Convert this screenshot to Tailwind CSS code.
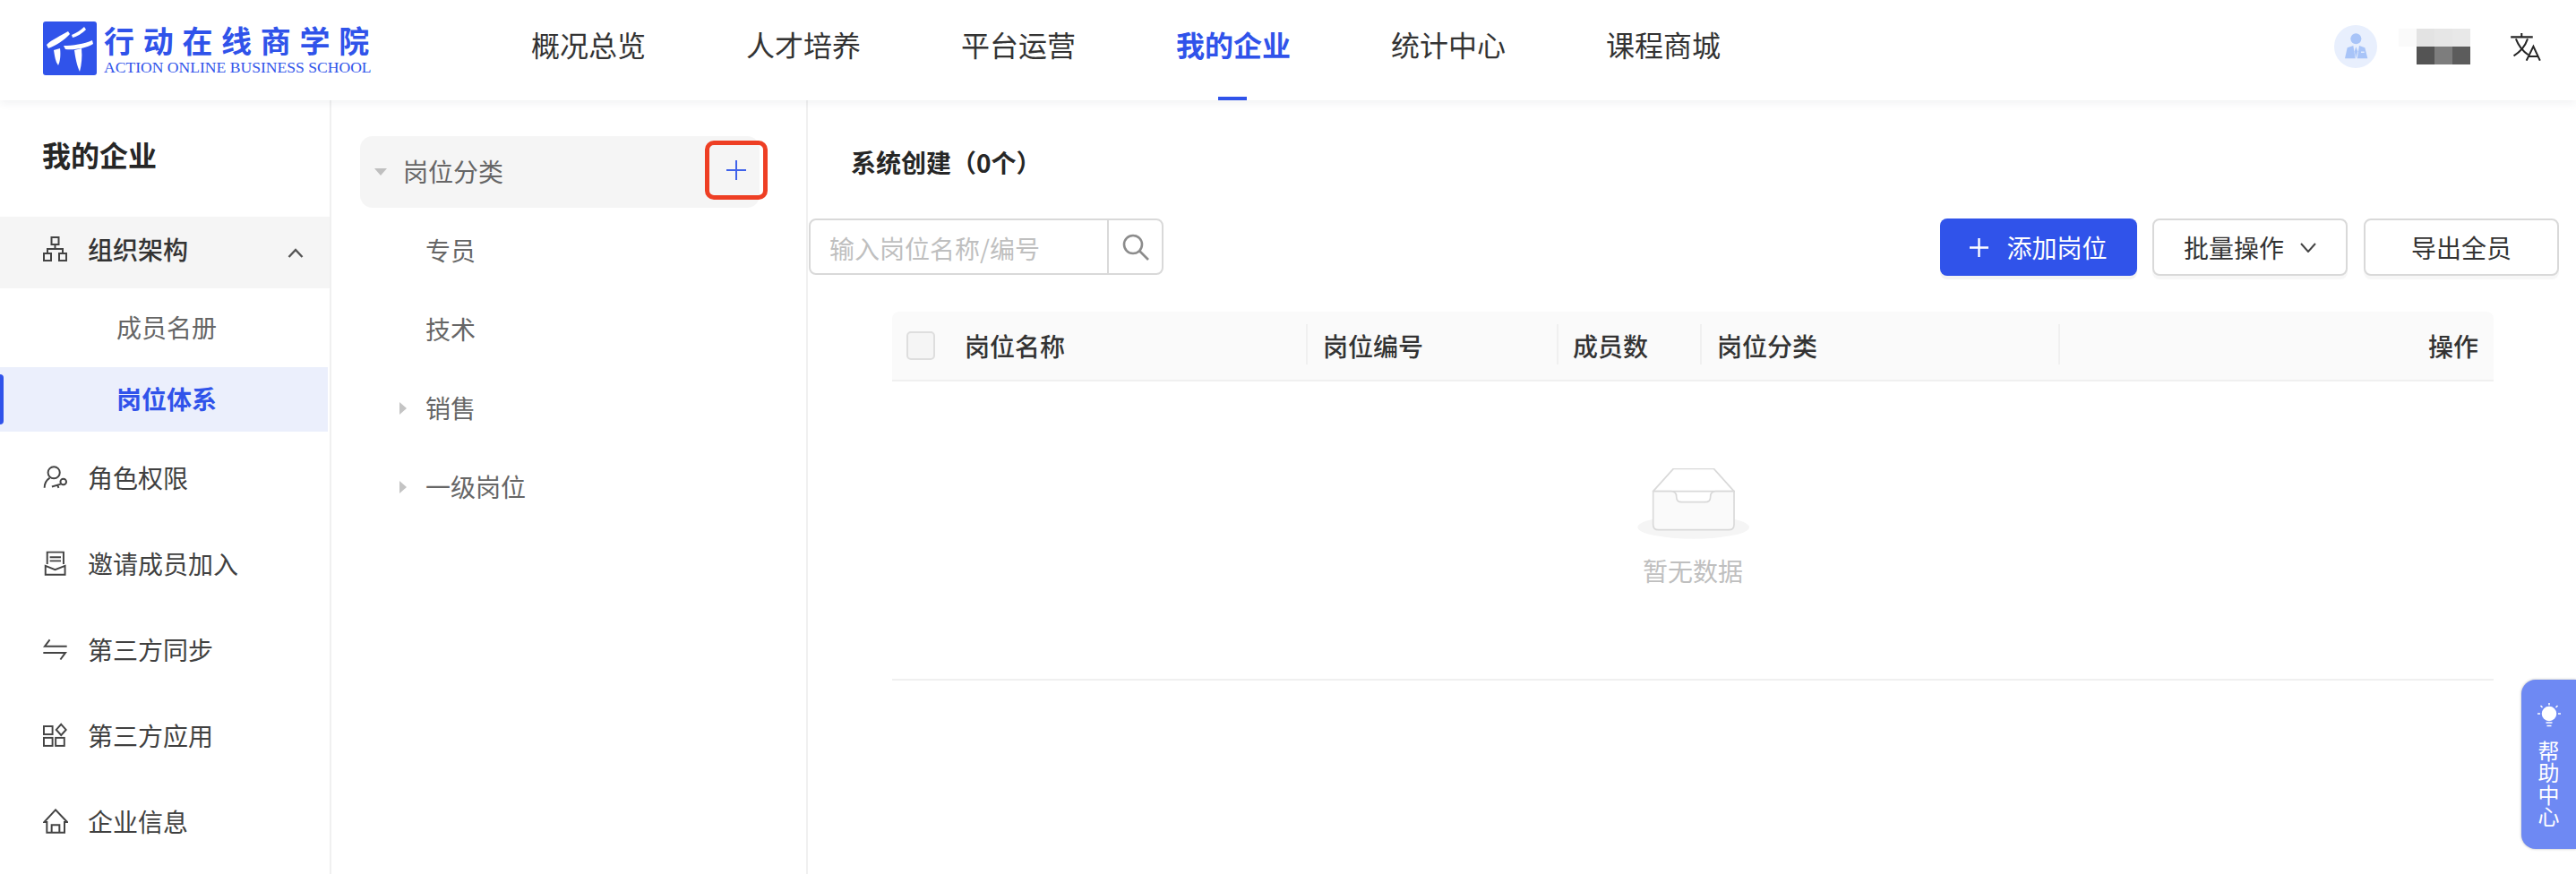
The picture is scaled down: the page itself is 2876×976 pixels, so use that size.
<!DOCTYPE html>
<html lang="zh-CN">
<head>
  <meta charset="UTF-8" />
  <title>我的企业 - 岗位体系</title>
  <script src="https://cdn.jsdelivr.net/npm/@tailwindcss/browser@4"></script>
</head>
<body class="bg-white text-[#333] font-['Noto_Sans_CJK_SC','Noto_Sans',sans-serif]">
<div class="relative w-[2876px] h-[976px] overflow-hidden flex flex-col">

  <!-- Top bar -->
  <header class="relative z-10 h-[112px] shrink-0 bg-white shadow-[0_2px_10px_rgba(40,50,80,0.08)] flex items-center">
    <div class="w-[593px] pl-[48px] pb-[4px] flex items-center gap-[8px] shrink-0">
      <svg class="w-[60px] h-[60px] shrink-0" viewBox="0 0 60 60">
        <rect width="60" height="60" rx="3" fill="#3053ea"/>
        <path d="M4 26 C10 20 20 16 28 11 L30 14 C24 21 14 27 6 30 Z" fill="#fff"/>
        <path d="M32 15 C37 13 42 10 46 6 L48 9 C44 13 38 17 33 18 Z" fill="#fff"/>
        <path d="M23 27 C33 27 46 25 55 21 L56 25 C48 30 35 32 25 31 Z" fill="#fff"/>
        <path d="M12 32 L19 30 C20 38 19 45 17 49 C14 45 13 39 12 32 Z" fill="#fff"/>
        <path d="M35 32 L43 30 C44 40 43 48 41 56 C38 50 36 40 35 32 Z" fill="#fff"/>
      </svg>
      <div class="flex flex-col">
        <span class="h-[42px] leading-[42px] text-[34px] font-bold tracking-[9.7px] whitespace-nowrap text-[#3053ea]">行动在线商学院</span>
        <span class="h-[18px] leading-[18px] text-[17.6px] whitespace-nowrap text-[#3053ea] font-['Liberation_Serif',serif]">ACTION ONLINE BUSINESS SCHOOL</span>
      </div>
    </div>

    <nav class="flex gap-[112px] text-[32px] leading-[40px] text-[#333]">
      <a class="h-[112px] pb-[14px] flex items-center">概况总览</a>
      <a class="h-[112px] pb-[14px] flex items-center">人才培养</a>
      <a class="h-[112px] pb-[14px] flex items-center">平台运营</a>
      <a class="relative h-[112px] pb-[14px] flex items-center font-semibold text-[#3053ea]">我的企业
        <span class="absolute left-[47px] bottom-0 w-[32px] h-[4px] bg-[#3053ea]"></span>
      </a>
      <a class="h-[112px] pb-[14px] flex items-center">统计中心</a>
      <a class="h-[112px] pb-[14px] flex items-center">课程商城</a>
    </nav>

    <div class="ml-auto pb-[8px] flex items-center pr-[39px]">
      <svg class="w-[48px] h-[48px]" viewBox="78 54 144 144">
        <circle cx="150" cy="126" r="72" fill="#e8effd"/>
        <circle cx="151" cy="100" r="18" fill="#a8c4f8"/>
        <path d="M114 166 L122 130 L142 123 L149 166 Z" fill="#a8c4f8"/>
        <path d="M162 123 L181 130 L190 166 L155 166 Z" fill="#a8c4f8"/>
        <path d="M151 127 L157 142 L151 164 L146 142 Z" fill="#a8c4f8"/>
        <rect x="168" y="143" width="11" height="3" fill="#fff"/>
      </svg>
      <div class="ml-[24px] w-[80px] h-[40px] grid grid-cols-4 grid-rows-2">
        <span class="bg-[#fafafa]"></span><span class="bg-[#e3e3e3]"></span><span class="bg-[#e6e6e6]"></span><span class="bg-[#e8e8e8]"></span>
        <span class="bg-white"></span><span class="bg-[#545454]"></span><span class="bg-[#7d7d7d]"></span><span class="bg-[#5c5c5c]"></span>
      </div>
      <svg class="ml-[45px] w-[34px] h-[31px]" viewBox="670 80 100 92" fill="none" stroke="#262626" stroke-width="6">
        <path d="M670 93 H743 M706 80 V93 M687 99 C695 120 710 140 728 152 M726 99 C718 122 702 142 680 155"/>
        <path d="M722 171 L745 124 L767 171 M729 157 H760"/>
      </svg>
    </div>
  </header>

  <div class="flex-1 flex min-h-0">
    <!-- Left menu -->
    <aside class="w-[370px] shrink-0 border-r-2 border-[#f0f0f0]">
      <h2 class="pl-[47px] pt-[40px] h-[130px] text-[32px] leading-[40px] font-semibold text-[#262626]">我的企业</h2>
      <div class="h-[80px] bg-[#f5f5f5] pb-[8px] flex items-center pl-[48px] pr-[29px] text-[28px] font-medium text-[#333]">
        <svg class="w-[27px] h-[28px] shrink-0" viewBox="0 0 27 28" fill="none" stroke="#444" stroke-width="2">
          <rect x="9.5" y="1" width="8" height="8"/><rect x="1" y="19" width="8" height="8"/><rect x="18" y="19" width="8" height="8"/>
          <path d="M13.5 9 V14 M5 19 V14 H22 V19"/>
        </svg>
        <span class="ml-[23px]">组织架构</span>
        <svg class="ml-auto w-[18px] h-[11px] mt-[8px]" viewBox="0 0 18 11" fill="none" stroke="#555" stroke-width="2.4"><path d="M1.5 10 L9 2 L16.5 10"/></svg>
      </div>
      <div class="mt-[8px] h-[72px] pb-[3px] flex items-center pl-[130px] text-[28px] text-[#666]">成员名册</div>
      <div class="relative mt-[8px] h-[72px] w-[366px] pb-[3px] bg-[#ebeffc] flex items-center pl-[130px] text-[28px] font-semibold text-[#3053ea]">
        <span class="absolute left-0 top-[8px] w-[4px] h-[56px] rounded-r bg-[#3053ea]"></span>岗位体系
      </div>

      <ul class="mt-[5px] text-[28px] text-[#404040]">
        <li class="h-[96px] pb-[4px] flex items-center gap-[23px] pl-[48px]">
          <svg class="w-[27px] h-[28px] shrink-0" viewBox="85 60 82 84" fill="none" stroke="#444" stroke-width="6">
            <circle cx="122" cy="86" r="20"/>
            <path d="M90 138 C90 122 96 112 108 104"/>
            <circle cx="154" cy="117" r="10"/>
            <path d="M115 134 L145 125 M134 128 L138 138"/>
          </svg>
          <span>角色权限</span>
        </li>
        <li class="h-[96px] pb-[4px] flex items-center gap-[23px] pl-[48px]">
          <svg class="w-[27px] h-[28px] shrink-0" viewBox="85 346 82 86" fill="none" stroke="#444" stroke-width="6">
            <path d="M99 392 V351 H155 V392"/>
            <path d="M108 368 H146 M108 381 H146"/>
            <path d="M93 398 L126 411 L160 398 V428 H93 Z"/>
          </svg>
          <span>邀请成员加入</span>
        </li>
        <li class="h-[96px] pb-[4px] flex items-center gap-[23px] pl-[48px]">
          <svg class="w-[27px] h-[28px] shrink-0" viewBox="85 636 82 84" fill="none" stroke="#444" stroke-width="6">
            <path d="M166 668 H91 L108 646"/>
            <path d="M86 690 H161 L144 713"/>
          </svg>
          <span>第三方同步</span>
        </li>
        <li class="h-[96px] pb-[4px] flex items-center gap-[23px] pl-[48px]">
          <svg class="w-[27px] h-[28px] shrink-0" viewBox="84 925 84 84" fill="none" stroke="#444" stroke-width="6">
            <rect x="87" y="936" width="30" height="28"/>
            <rect x="87" y="976" width="30" height="28"/>
            <rect x="128" y="976" width="30" height="28"/>
            <path d="M147 929 L164 948 L147 967 L130 948 Z"/>
          </svg>
          <span>第三方应用</span>
        </li>
        <li class="h-[96px] pb-[4px] flex items-center gap-[22px] pl-[48px]">
          <svg class="w-[28px] h-[28px] shrink-0" viewBox="84 1213 84 84" fill="none" stroke="#444" stroke-width="6">
            <path d="M126 1217 L88 1258 H97 V1293 H156 V1258 H165 Z"/>
            <path d="M113 1293 V1268 H139 V1293"/>
          </svg>
          <span>企业信息</span>
        </li>
      </ul>
    </aside>

    <!-- Category tree -->
    <section class="w-[532px] shrink-0 border-r-2 border-[#f0f0f0] pt-[40px] pl-[32px] text-[28px] text-[#666]">
      <div class="relative w-[446px] h-[80px] rounded-[14px] bg-[#f5f5f5] flex items-center">
        <span class="ml-[16px] w-0 h-0 border-x-[7.5px] border-x-transparent border-t-[8px] border-t-[#bfbfbf]"></span>
        <span class="ml-[18px] mb-[3px]">岗位分类</span>
        <span class="absolute left-[385px] top-[5px] w-[70px] h-[66px] rounded-[10px] border-[5px] border-[#ee3f24] flex items-center justify-center">
          <svg class="w-[22px] h-[22px]" viewBox="0 0 22 22" fill="none" stroke="#3f62ea" stroke-width="2"><path d="M11 0 V22 M0 11 H22"/></svg>
        </span>
      </div>
      <div class="mt-[8px] h-[80px] pb-[3px] flex items-center pl-[73px]">专员</div>
      <div class="mt-[8px] h-[80px] pb-[3px] flex items-center pl-[73px]">技术</div>
      <div class="mt-[8px] h-[80px] flex items-center pl-[44px]">
        <span class="w-0 h-0 border-y-[7px] border-y-transparent border-l-[8px] border-l-[#c4c4c4]"></span>
        <span class="ml-[21px] mb-[3px]">销售</span>
      </div>
      <div class="mt-[8px] h-[80px] flex items-center pl-[44px]">
        <span class="w-0 h-0 border-y-[7px] border-y-transparent border-l-[8px] border-l-[#c4c4c4]"></span>
        <span class="ml-[21px] mb-[3px]">一级岗位</span>
      </div>
    </section>

    <!-- Main -->
    <main class="flex-1 min-w-0 pt-[49px]">
      <h3 class="pl-[48px] h-[40px] leading-[40px] text-[28px] font-semibold text-[#262626]">系统创建（0个）</h3>

      <div class="mt-[43px] pl-[1px] pr-[19px] flex justify-between items-start">
        <div class="w-[396px] h-[63px] flex rounded-[8px] border-2 border-[#d9d9d9] bg-white">
          <div class="flex-1 pl-[21px] pt-[2px] flex items-center text-[28px] text-[#bfbfbf]">输入岗位名称/编号</div>
          <div class="w-[61px] border-l-2 border-[#d9d9d9] flex items-center justify-center">
            <svg class="w-[30px] h-[30px]" viewBox="0 0 30 30" fill="none" stroke="#8c8c8c" stroke-width="2.6"><circle cx="12" cy="12" r="10"/><path d="M19 19 L29 29"/></svg>
          </div>
        </div>
        <div class="flex items-center text-[28px]">
          <button class="w-[220px] h-[64px] rounded-[8px] bg-[#3053ea] text-white shadow-[0_4px_0_#f3f3f3] flex items-center justify-center gap-[20px]">
            <svg class="w-[21px] h-[21px]" viewBox="0 0 21 21" fill="none" stroke="#fff" stroke-width="2.4"><path d="M10.5 0 V21 M0 10.5 H21"/></svg>
            <span>添加岗位</span>
          </button>
          <button class="ml-[17px] w-[218px] h-[64px] rounded-[8px] border-2 border-[#d9d9d9] bg-white text-[#333] shadow-[0_4px_0_#f7f7f7] flex items-center justify-center gap-[18px]">
            <span>批量操作</span>
            <svg class="w-[18px] h-[11px]" viewBox="0 0 18 11" fill="none" stroke="#444" stroke-width="2"><path d="M1 1 L9 10 L17 1"/></svg>
          </button>
          <button class="ml-[18px] w-[218px] h-[64px] rounded-[8px] border-2 border-[#d9d9d9] bg-white text-[#333] shadow-[0_4px_0_#f7f7f7] flex items-center justify-center">导出全员</button>
        </div>
      </div>

      <!-- Table -->
      <div class="mt-[40px] ml-[94px] w-[1788px]">
        <div class="h-[78px] grid grid-cols-[66px_398px_280px_160px_400px_1fr] items-center rounded-t-[8px] bg-[#fafafa] border-b-2 border-[#f0f0f0] text-[28px] font-medium text-[#333]">
          <div class="pl-[16px]"><span class="block w-[32px] h-[32px] rounded-[5px] border-2 border-[#dedede] bg-[#f5f5f5]"></span></div>
          <div class="relative pl-[15px] after:absolute after:right-0 after:top-[-3px] after:h-[45px] after:w-[2px] after:bg-[#f0f0f0]">岗位名称</div>
          <div class="relative pl-[17px] after:absolute after:right-0 after:top-[-3px] after:h-[45px] after:w-[2px] after:bg-[#f0f0f0]">岗位编号</div>
          <div class="relative pl-[16px] after:absolute after:right-0 after:top-[-3px] after:h-[45px] after:w-[2px] after:bg-[#f0f0f0]">成员数</div>
          <div class="relative pl-[17px] after:absolute after:right-0 after:top-[-3px] after:h-[45px] after:w-[2px] after:bg-[#f0f0f0]">岗位分类</div>
          <div class="text-right pr-[17px]">操作</div>
        </div>
        <div class="h-[334px] border-b-2 border-[#f0f0f0] flex flex-col items-center pt-[97px]">
          <svg class="w-[125px] h-[79px]" viewBox="682 130 375 237">
            <ellipse cx="870" cy="327" rx="187" ry="39" fill="#f5f5f5"/>
            <path d="M735 207 L803 131 H938 L1006 207 Z" fill="#fff" stroke="#d9d9d9" stroke-width="5" stroke-linejoin="round"/>
            <path d="M735 207 H795 Q813 207 813 225 Q813 243 831 243 H909 Q927 243 927 225 Q927 207 945 207 H1006 V318 Q1006 336 988 336 H753 Q735 336 735 318 Z" fill="#fafafa" stroke="#d9d9d9" stroke-width="5"/>
          </svg>
          <p class="mt-[15px] text-[28px] leading-[40px] text-[#bfbfbf]">暂无数据</p>
        </div>
      </div>
    </main>
  </div>

  <!-- Help tab -->
  <div class="absolute right-0 top-[759px] w-[61px] h-[189px] rounded-l-[16px] bg-[#6e89f3] shadow-[0_0_3px_rgba(0,0,0,0.3)] flex flex-col items-center pt-[26px]">
    <svg class="w-[26px] h-[27px] shrink-0" viewBox="0 0 26 27" fill="none" stroke="#fff" stroke-width="1.5">
      <circle cx="13" cy="12" r="7.5" fill="#fff"/>
      <path d="M13 0 V2.5 M3.5 3 L5.5 5 M22.5 3 L20.5 5 M0 12 H3 M23 12 H26 M9.5 22 H16.5 M10.5 25.5 H15.5"/>
    </svg>
    <div class="mt-[14px] w-[24px] text-[24px] leading-[24.3px] text-center text-white">帮助中心</div>
  </div>
</div>
</body>
</html>
